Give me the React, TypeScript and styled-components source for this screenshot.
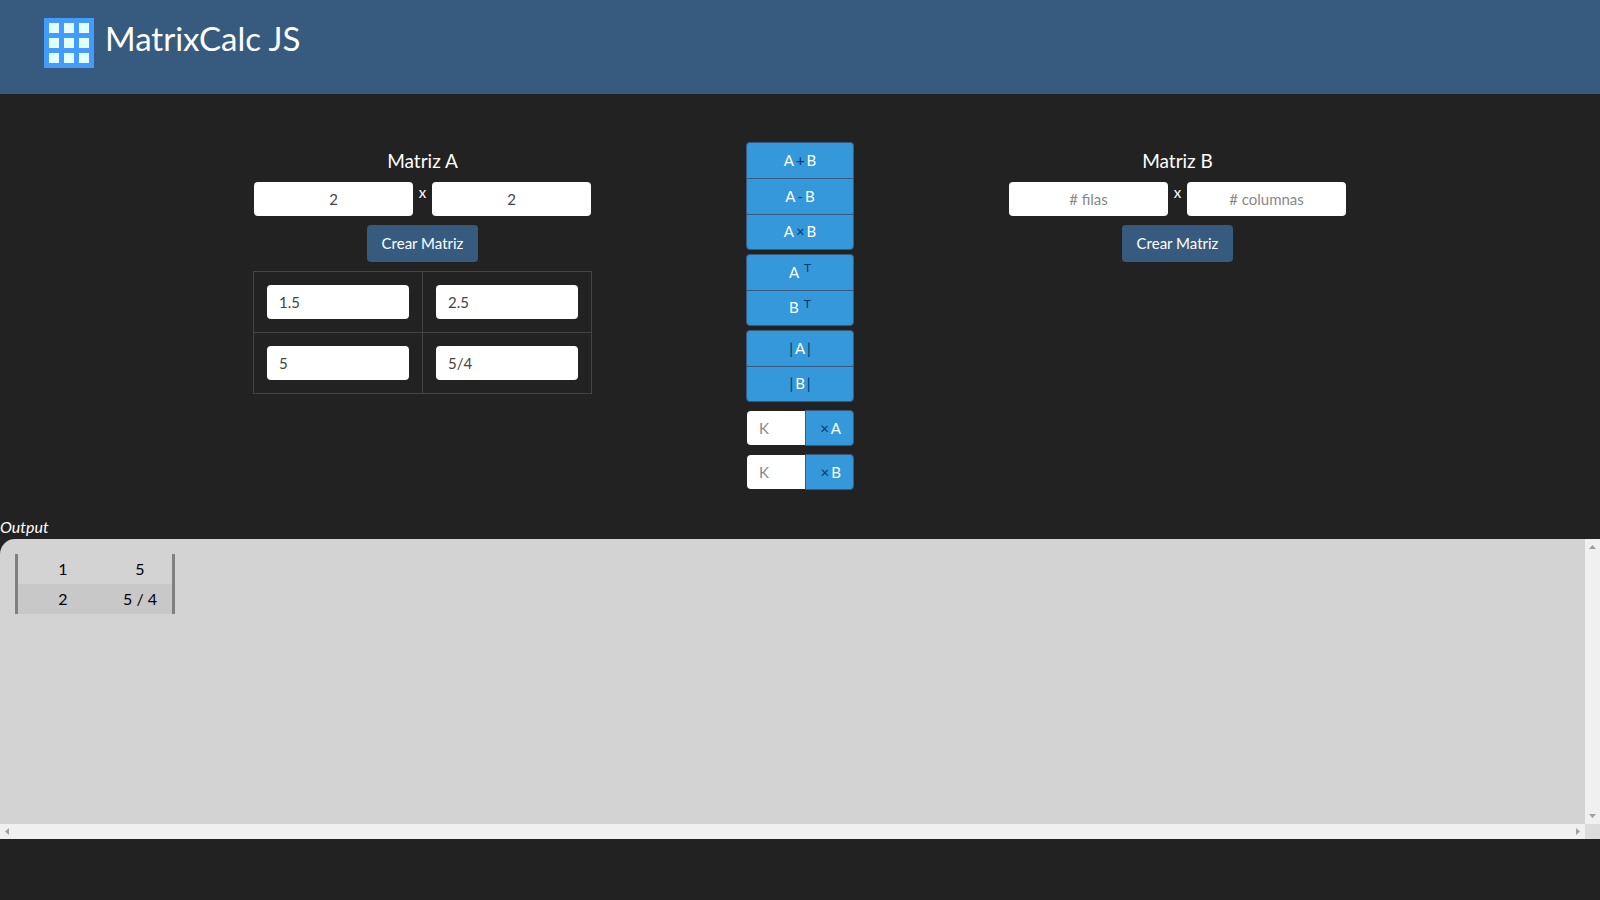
import React from "react";
import styled, { createGlobalStyle, css } from "styled-components";

const Global = createGlobalStyle`
  *, *::before, *::after { box-sizing: border-box; }
  body {
    margin: 0;
    background: #222;
    color: #fff;
    font-family: Lato, "Liberation Sans", sans-serif;
    font-size: 15px;
    line-height: 22px;
  }
`;

const Header = styled.header`
  display: flex;
  align-items: flex-start;
  gap: 11px;
  height: 94px;
  padding: 18px 44px 0;
  background: #375a7f;
`;

const Title = styled.h1`
  margin: 0;
  font-size: 33px;
  font-weight: 400;
  line-height: 40px;
`;

const Workspace = styled.main`
  display: flex;
  justify-content: center;
  align-items: flex-start;
  gap: 154px;
  padding-top: 48px;
`;

const MatrixPanel = styled.section`
  display: flex;
  flex-direction: column;
  align-items: center;
  gap: 9px;
  width: 339px;
  padding-top: 7px;
`;

const PanelTitle = styled.h2`
  margin: 0;
  font-size: 19px;
  font-weight: 400;
  line-height: 24px;
`;

const SizeRow = styled.div`
  display: flex;
  justify-content: space-between;
  width: 100%;
  padding: 0 1px;
  line-height: 20px;
`;

const fieldStyle = css`
  min-width: 0;
  height: 34px;
  padding: 0 12px;
  border: 0;
  border-radius: 4px;
  background: #fff;
  color: #444;
  font-family: inherit;
  font-size: 15px;
  &::placeholder { color: #888; opacity: 1; }
`;

const SizeInput = styled.input`
  ${fieldStyle}
  width: 159px;
  text-align: center;
`;

const CellInput = styled.input`
  ${fieldStyle}
  display: block;
  width: 100%;
`;

const CreateButton = styled.button`
  height: 37px;
  padding: 0 15px 2px;
  border: 0;
  border-radius: 4px;
  background: #375a7f;
  color: #fff;
  font-family: inherit;
  font-size: 15px;
`;

const EntryTable = styled.table`
  width: 100%;
  table-layout: fixed;
  border-collapse: collapse;
  td {
    height: 61px;
    padding: 13px;
    border: 1px solid #444;
    vertical-align: top;
  }
`;

const Operations = styled.section`
  display: flex;
  flex-direction: column;
  gap: 4px;
  width: 108px;
`;

const opStyle = css`
  display: flex;
  justify-content: center;
  align-items: center;
  border: 1px solid #375a7f;
  background: #3498db;
  color: #fff;
  font-family: inherit;
  font-size: 15px;
  line-height: 22px;
`;

const ButtonGroup = styled.div`
  display: flex;
  flex-direction: column;
`;

const OpButton = styled.button<{ $gap?: number }>`
  ${opStyle}
  gap: ${(p) => p.$gap ?? 2}px;
  height: 36px;
  padding: 0 0 2px;
  &:not(:last-child) { border-bottom: 0; }
  &:first-child { border-top-left-radius: 4px; border-top-right-radius: 4px; }
  &:last-child { border-bottom-left-radius: 4px; border-bottom-right-radius: 4px; }
`;

const Sign = styled.span`
  color: #03396c;
`;

const Exponent = styled.sup`
  align-self: flex-start;
  padding-top: 2px;
  color: #03396c;
  font-size: 12px;
`;

const ScalarRow = styled.div`
  display: flex;
  align-items: center;
  margin-top: 4px;
`;

const ScalarInput = styled.input`
  ${fieldStyle}
  flex: 1;
  margin-left: 1px;
  border-radius: 4px 0 0 4px;
`;

const ScalarButton = styled.button`
  ${opStyle}
  justify-content: flex-end;
  gap: 2px;
  width: 49px;
  height: 36px;
  padding: 0 12px 0 0;
  border-radius: 0 4px 4px 0;
`;

const OutputLabel = styled.h3`
  margin: 25px 0 0;
  font-size: 16px;
  font-style: italic;
  font-weight: 400;
  line-height: 24px;
`;

const OutputBox = styled.section`
  display: grid;
  grid-template-columns: 1fr 15px;
  grid-template-rows: 1fr 15px;
  height: 300px;
  overflow: hidden;
  border-top-left-radius: 15px;
  background: lightgray;
  color: #000;
`;

const OutputContent = styled.div`
  padding: 15px;
`;

const ResultTable = styled.table`
  border-collapse: separate;
  border-spacing: 0;
  border-left: 3px solid gray;
  border-right: 3px solid gray;
  font-size: 16px;
  td {
    width: 77px;
    height: 30px;
    padding: 0 14px 0 27px;
    text-align: center;
    white-space: nowrap;
  }
  tr:nth-child(even) td { background: rgba(0, 0, 0, 0.05); }
`;

const ScrollTrack = styled.div<{ $vertical?: boolean }>`
  display: flex;
  flex-direction: ${(p) => (p.$vertical ? "column" : "row")};
  justify-content: space-between;
  align-items: center;
  padding: ${(p) => (p.$vertical ? "6px 0" : "0 5px")};
  background: #f0f0f0;
`;

const ScrollCorner = styled.div`
  background: #dcdcdc;
`;

const arrowPoints = {
  up: "0,4 3.5,0 7,4",
  down: "0,0 7,0 3.5,4",
  left: "4,0 4,7 0,3.5",
  right: "0,0 4,3.5 0,7",
};

function Arrow({ to }: { to: keyof typeof arrowPoints }) {
  const upright = to === "up" || to === "down";
  return (
    <svg width={upright ? 7 : 4} height={upright ? 4 : 7} aria-hidden="true">
      <polygon points={arrowPoints[to]} fill="#a0a0a0" />
    </svg>
  );
}

function Logo() {
  const steps = [5, 20, 35];
  return (
    <svg width="50" height="50" viewBox="0 0 50 50" aria-hidden="true">
      <rect width="50" height="50" fill="#439cfb" />
      {steps.map((y) =>
        steps.map((x) => (
          <rect key={`${x}-${y}`} x={x} y={y} width="10" height="10" fill="#e3ffff" />
        ))
      )}
    </svg>
  );
}

interface MatrixProps {
  name: string;
  rows?: string;
  columns?: string;
  entries?: string[][];
}

function Matrix({ name, rows, columns, entries }: MatrixProps) {
  return (
    <MatrixPanel aria-label={`Matriz ${name}`}>
      <PanelTitle>Matriz {name}</PanelTitle>
      <SizeRow>
        <SizeInput aria-label={`Filas de ${name}`} placeholder="# filas" defaultValue={rows} />
        <span>x</span>
        <SizeInput aria-label={`Columnas de ${name}`} placeholder="# columnas" defaultValue={columns} />
      </SizeRow>
      <CreateButton type="button">Crear Matriz</CreateButton>
      {entries && (
        <EntryTable>
          <tbody>
            {entries.map((row, r) => (
              <tr key={r}>
                {row.map((value, c) => (
                  <td key={c}>
                    <CellInput aria-label={`${name} ${r + 1},${c + 1}`} defaultValue={value} />
                  </td>
                ))}
              </tr>
            ))}
          </tbody>
        </EntryTable>
      )}
    </MatrixPanel>
  );
}

const result = [
  ["1", "5"],
  ["2", "5 / 4"],
];

export default function App() {
  return (
    <>
      <Global />
      <Header>
        <Logo />
        <Title>MatrixCalc JS</Title>
      </Header>
      <Workspace>
        <Matrix name="A" rows="2" columns="2" entries={[["1.5", "2.5"], ["5", "5/4"]]} />
        <Operations aria-label="Operaciones">
          <ButtonGroup>
            {["+", "-", "×"].map((sign) => (
              <OpButton type="button" key={sign}>
                A <Sign>{sign}</Sign> B
              </OpButton>
            ))}
          </ButtonGroup>
          <ButtonGroup>
            {["A", "B"].map((m) => (
              <OpButton type="button" key={m} $gap={5}>
                {m} <Exponent>T</Exponent>
              </OpButton>
            ))}
          </ButtonGroup>
          <ButtonGroup>
            {["A", "B"].map((m) => (
              <OpButton type="button" key={m}>
                <Sign>|</Sign> {m} <Sign>|</Sign>
              </OpButton>
            ))}
          </ButtonGroup>
          {["A", "B"].map((m) => (
            <ScalarRow key={m}>
              <ScalarInput aria-label={`Escalar para ${m}`} placeholder="K" />
              <ScalarButton type="button">
                <Sign>×</Sign> {m}
              </ScalarButton>
            </ScalarRow>
          ))}
        </Operations>
        <Matrix name="B" />
      </Workspace>
      <OutputLabel>Output</OutputLabel>
      <OutputBox aria-label="Output">
        <OutputContent>
          <ResultTable>
            <tbody>
              {result.map((row, r) => (
                <tr key={r}>
                  {row.map((value, c) => (
                    <td key={c}>{value}</td>
                  ))}
                </tr>
              ))}
            </tbody>
          </ResultTable>
        </OutputContent>
        <ScrollTrack $vertical>
          <Arrow to="up" />
          <Arrow to="down" />
        </ScrollTrack>
        <ScrollTrack>
          <Arrow to="left" />
          <Arrow to="right" />
        </ScrollTrack>
        <ScrollCorner />
      </OutputBox>
    </>
  );
}
